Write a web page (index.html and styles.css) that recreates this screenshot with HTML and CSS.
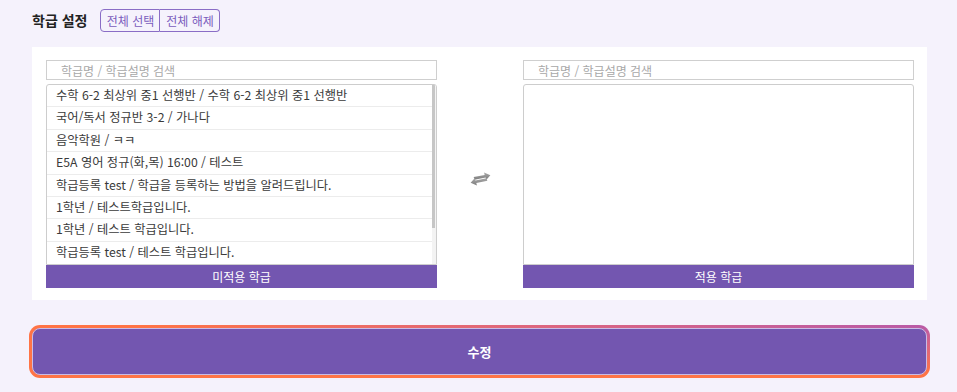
FILE: index.html
```html
<!DOCTYPE html>
<html lang="ko">
<head>
<meta charset="utf-8">
<title>학급 설정</title>
<link rel="stylesheet" href="styles.css">
</head>
<body>
<div class="page">
  <div class="head">
    <h2 class="title">학급 설정</h2>
    <div class="btn-group">
      <button class="gbtn">전체 선택</button>
      <button class="gbtn">전체 해제</button>
    </div>
  </div>
  <div class="panel">
    <div class="col">
      <input class="search" type="text" placeholder="학급명 / 학급설명 검색">
      <div class="list">
        <ul class="rows">
          <li>수학 6-2 최상위 중1 선행반 / 수학 6-2 최상위 중1 선행반</li>
          <li>국어/독서 정규반 3-2 / 가나다</li>
          <li>음악학원 / ㅋㅋ</li>
          <li>E5A 영어 정규(화,목) 16:00 / 테스트</li>
          <li>학급등록 test / 학급을 등록하는 방법을 알려드립니다.</li>
          <li>1학년 / 테스트학급입니다.</li>
          <li>1학년 / 테스트 학급입니다.</li>
          <li>학급등록 test / 테스트 학급입니다.</li>
        </ul>
        <div class="track"><div class="thumb"></div></div>
      </div>
      <div class="foot">미적용 학급</div>
    </div>
    <div class="mid">
      <svg class="swap" width="21" height="14" viewBox="0 0 20 13" aria-hidden="true">
        <defs>
          <linearGradient id="g" x1="0" y1="0" x2="0" y2="1">
            <stop offset="0" stop-color="#a9a9a9"/>
            <stop offset="1" stop-color="#7c7c7c"/>
          </linearGradient>
        </defs>
        <path d="M3.5 4.6 L14 2.6 L13.4 0.2 L19.4 3 L15.4 7.4 L14.9 5 L4.3 7.3 Z" fill="url(#g)"/>
        <path d="M16.5 8.2 L6 10.3 L6.6 12.8 L0.6 10 L4.6 5.6 L5.1 8 L15.7 5.7 Z" fill="url(#g)"/>
      </svg>
    </div>
    <div class="col">
      <input class="search" type="text" placeholder="학급명 / 학급설명 검색">
      <div class="list"></div>
      <div class="foot">적용 학급</div>
    </div>
  </div>
  <div class="ring">
    <button class="submit">수정</button>
  </div>
</div>
</body>
</html>
```
FILE: styles.css
```css
* { box-sizing: border-box; }
html, body { margin: 0; padding: 0; }
body {
  background: #f5f2fc;
  font-family: "Noto Sans CJK KR", "Noto Sans", sans-serif;
  color: #333;
}
.page {
  padding: 9px 30px 0 32px;
}
.head {
  display: flex;
  align-items: center;
  gap: 13px;
  height: 23px;
}
.title {
  margin: 0;
  font-size: 14px;
  font-weight: 700;
  color: #222;
  line-height: 23px;
}
.btn-group {
  display: flex;
  height: 23px;
}
.gbtn {
  font-family: inherit;
  font-size: 12px;
  color: #7a5cbc;
  background: transparent;
  border: 1px solid #8a6dc6;
  height: 23px;
  padding: 0 4px;
  width: 60px;
  line-height: 20px;
  cursor: pointer;
}
.gbtn:first-child { border-radius: 4px 0 0 4px; }
.gbtn:last-child { border-radius: 0 4px 4px 0; border-left: 0; }
.panel {
  margin-top: 15px;
  background: #fff;
  height: 253px;
  padding: 13px 13px 0 14px;
  display: flex;
}
.col {
  width: 391px;
  display: flex;
  flex-direction: column;
}
.mid {
  flex: 1;
  display: flex;
  align-items: center;
  justify-content: center;
  padding-bottom: 2px;
}
.swap { display: block; }
.search {
  height: 20px;
  border: 1px solid #cfcfcf;
  font-family: inherit;
  font-size: 12px;
  padding: 0 14px;
  color: #333;
  outline: none;
  background: #fff;
}
.search::placeholder { color: #a8a8a8; }
.list {
  margin-top: 4px;
  height: 181px;
  border: 1px solid #cdcdcd;
  border-radius: 3px 3px 0 0;
  display: flex;
  overflow: hidden;
}
.rows {
  list-style: none;
  margin: 0;
  padding: 0;
  flex: 1;
  min-width: 0;
}
.rows li {
  height: 22.4px;
  line-height: 21.4px;
  border-bottom: 1px solid #ececec;
  padding-left: 9px;
  font-size: 12.25px;
  color: #3a3a3a;
  white-space: nowrap;
}
.rows li:last-child { border-bottom: 0; }
.track {
  width: 4px;
  background: #f3f3f3;
  display: flex;
  flex-direction: column;
}
.thumb {
  height: 143px;
  width: 3px;
  background: #c6c6c6;
}
.foot {
  height: 23px;
  background: #7356b0;
  color: #fff;
  font-size: 12px;
  text-align: center;
  line-height: 23px;
}
.ring {
  margin: 25px -3px 0 -3px;
  padding: 3px;
  border-radius: 11px;
  background: radial-gradient(farthest-corner at 100% 0%, #b85aa8 0%, #dc6680 30%, #ff7446 62%, #ff7446 100%);
}
.submit {
  display: block;
  width: 100%;
  height: 47px;
  border: 1px solid #c9bbe6;
  border-radius: 8px;
  background: #7356b0;
  color: #fff;
  font-family: inherit;
  font-size: 13px;
  font-weight: 700;
  cursor: pointer;
}
```
